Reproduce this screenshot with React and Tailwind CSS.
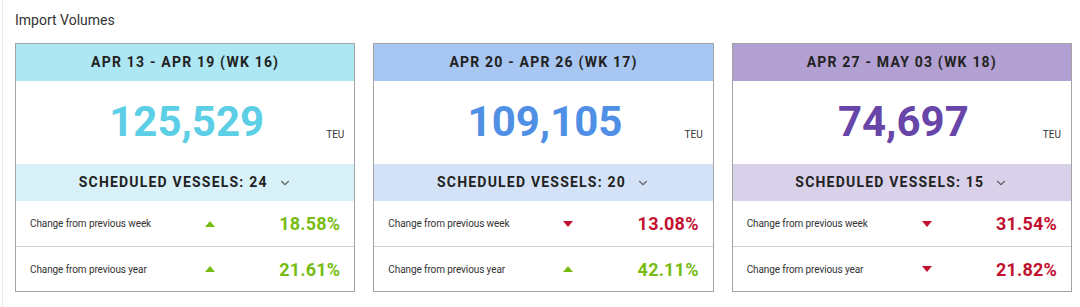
import { ChevronDown } from 'lucide-react';

const weeks = [
  {
    label: 'APR 13 - APR 19 (WK 16)',
    total: '125,529',
    vessels: 24,
    head: 'bg-[#ade7f3]',
    band: 'bg-[#d8f1f8]',
    num: 'text-[#5ccfe6]',
    rows: [
      { label: 'Change from previous week', up: true, value: '18.58%' },
      { label: 'Change from previous year', up: true, value: '21.61%' },
    ],
  },
  {
    label: 'APR 20 - APR 26 (WK 17)',
    total: '109,105',
    vessels: 20,
    head: 'bg-[#a7c6f1]',
    band: 'bg-[#d4e2f8]',
    num: 'text-[#4f8fe5]',
    rows: [
      { label: 'Change from previous week', up: false, value: '13.08%' },
      { label: 'Change from previous year', up: true, value: '42.11%' },
    ],
  },
  {
    label: 'APR 27 - MAY 03 (WK 18)',
    total: '74,697',
    vessels: 15,
    head: 'bg-[#b1a0d1]',
    band: 'bg-[#d9d0e9]',
    num: 'text-[#6845a8]',
    rows: [
      { label: 'Change from previous week', up: false, value: '31.54%' },
      { label: 'Change from previous year', up: false, value: '21.82%' },
    ],
  },
];

const Arrow = ({ up }) => (
  <svg width="10" height="6" viewBox="0 0 10 6" className={up ? 'fill-[#76bc12]' : 'fill-[#c1112f]'}>
    {up ? <path d="M0 6 L5 0 L10 6 Z" /> : <path d="M0 0 L10 0 L5 6 Z" />}
  </svg>
);

const WeekCard = ({ week }) => (
  <div className="flex-1 border border-[#a3a3a3] flex flex-col">
    <div className={`${week.head} h-[37px] flex items-center justify-center text-[14px] font-bold tracking-[1.2px] text-[#222]`}>
      {week.label}
    </div>
    <div className="relative h-[83px] flex items-center justify-center">
      <span className={`${week.num} text-[42px] font-bold leading-none -mt-[2px] ml-[3px]`}>{week.total}</span>
      <span className="absolute right-[10px] top-[46px] text-[10px] text-[#333]">TEU</span>
    </div>
    <div className={`${week.band} h-[37px] flex items-center justify-center gap-[10px] text-[14px] font-bold tracking-[1.2px] text-[#222]`}>
      <span>SCHEDULED VESSELS: {week.vessels}</span>
      <ChevronDown size={14} strokeWidth={2} className="text-[#666]" />
    </div>
    {week.rows.map((row, i) => (
      <div
        key={row.label}
        className={`h-[45px] grid grid-cols-[170px_20px_1fr] items-center pl-[14px] pr-[14px] ${i === 0 ? '' : 'border-t border-[#d0d0d0]'}`}
      >
        <span className="text-[10px] tracking-[-0.1px] text-[#333]">{row.label}</span>
        <span className="flex justify-center">
          <Arrow up={row.up} />
        </span>
        <span className={`text-right text-[18px] font-bold tracking-[0.2px] ${row.up ? 'text-[#76bc12]' : 'text-[#c1112f]'}`}>
          {row.value}
        </span>
      </div>
    ))}
  </div>
);

export default function App() {
  return (
    <div className="w-[1080px] h-[307px] bg-white font-['Roboto',sans-serif] border-l border-[#ececec] ml-[2px] overflow-hidden">
      <div className="pl-[12px] pr-[10px] pt-[10px]">
        <h2 className="text-[14px] text-[#333] leading-[20px] mb-[13px]">Import Volumes</h2>
        <div className="flex gap-[18px]">
          {weeks.map((w) => (
            <WeekCard key={w.label} week={w} />
          ))}
        </div>
      </div>
    </div>
  );
}
